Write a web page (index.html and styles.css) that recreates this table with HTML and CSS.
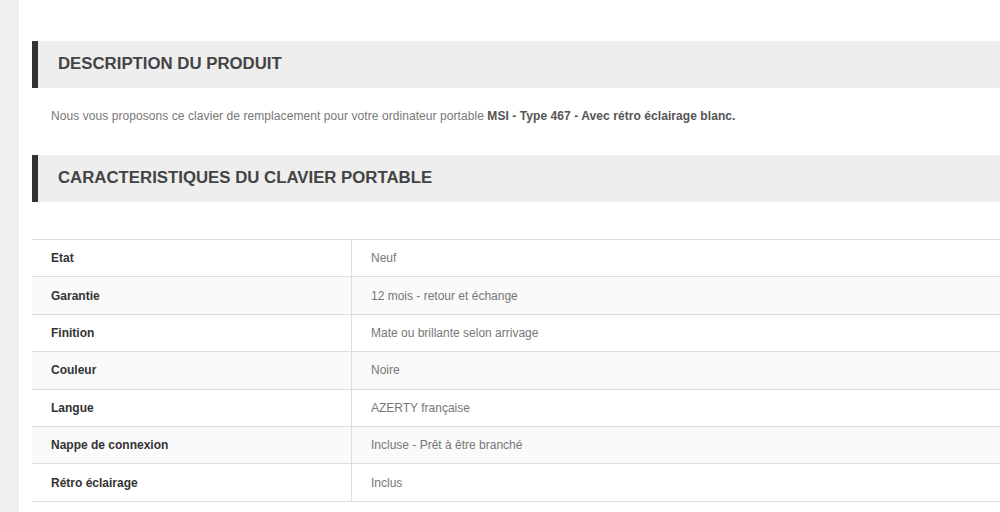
FILE: index.html
```html
<!DOCTYPE html>
<html lang="fr">
<head>
<meta charset="utf-8">
<title>Clavier MSI</title>
<link rel="stylesheet" href="styles.css">
</head>
<body>
<div class="page">
  <aside class="strip"></aside>
  <main class="content">
    <h2 class="section-title">DESCRIPTION DU PRODUIT</h2>
    <p class="desc">Nous vous proposons ce clavier de remplacement pour votre ordinateur portable <strong>MSI - Type 467 - Avec rétro éclairage blanc.</strong></p>
    <h2 class="section-title">CARACTERISTIQUES DU CLAVIER PORTABLE</h2>
    <table class="specs">
      <tr><th>Etat</th><td>Neuf</td></tr>
      <tr><th>Garantie</th><td>12 mois - retour et échange</td></tr>
      <tr><th>Finition</th><td>Mate ou brillante selon arrivage</td></tr>
      <tr><th>Couleur</th><td>Noire</td></tr>
      <tr><th>Langue</th><td>AZERTY française</td></tr>
      <tr><th>Nappe de connexion</th><td>Incluse - Prêt à être branché</td></tr>
      <tr><th>Rétro éclairage</th><td>Inclus</td></tr>
    </table>
  </main>
</div>
</body>
</html>
```
FILE: styles.css
```css
html, body {
  margin: 0;
  padding: 0;
  background: #fff;
  overflow: hidden;
}
body {
  font-family: "Liberation Sans", Arial, sans-serif;
}
.page {
  display: flex;
  width: 1100px;
  min-height: 512px;
}
.strip {
  width: 19px;
  flex: none;
  background: #efefef;
}
.content {
  flex: 1;
  padding: 41px 0 0 13px;
}
.section-title {
  margin: 0;
  height: 47px;
  display: flex;
  align-items: center;
  background: #eeeeee;
  border-left: 6px solid #333;
  padding-left: 20px;
  padding-bottom: 2px;
  box-sizing: border-box;
  font-size: 16.8px;
  font-weight: bold;
  color: #444;
}
.desc {
  margin: 19px 0 30px;
  padding-left: 19px;
  font-size: 12px;
  line-height: 18px;
  letter-spacing: 0.07px;
  color: #777;
}
.desc strong {
  color: #555;
}
.specs {
  margin-top: 37px;
  width: 100%;
  border-collapse: collapse;
  font-size: 12px;
}
.specs tr {
  border-top: 1px solid #dddddd;
  border-bottom: 1px solid #dddddd;
}
.specs tr:nth-child(even) {
  background: #fafafa;
}
.specs th, .specs td {
  height: 36.4px;
  padding: 0 0 0 19px;
  text-align: left;
  vertical-align: middle;
}
.specs th {
  width: 300px;
  color: #333;
  font-weight: bold;
  border-right: 1px solid #dddddd;
}
.specs td {
  padding-left: 19px;
  color: #777;
}
```
